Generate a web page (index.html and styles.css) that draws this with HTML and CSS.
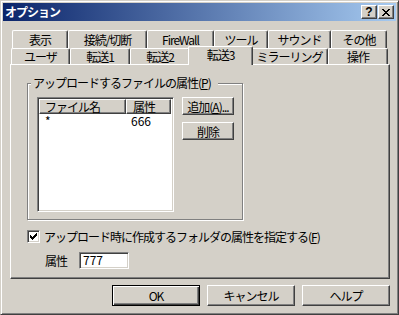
FILE: index.html
```html
<!DOCTYPE html>
<html lang="ja">
<head>
<meta charset="utf-8">
<title>オプション</title>
<link rel="stylesheet" href="styles.css">
</head>
<body>
<div class="window">
  <div class="titlebar">
    <span class="title">オプション</span>
    <div class="caption-btns">
      <span class="cbtn help">?</span>
      <span class="cbtn close"><svg width="8" height="7" viewBox="0 0 8 7" shape-rendering="crispEdges"><path d="M0 0h2v1h-2zM6 0h2v1h-2zM1 1h2v1h-2zM5 1h2v1h-2zM2 2h4v1h-4zM3 3h2v1h-2zM2 4h4v1h-4zM1 5h2v1h-2zM5 5h2v1h-2zM0 6h2v1h-2zM6 6h2v1h-2z" fill="#000"/></svg></span>
    </div>
  </div>
  <div class="client">
    <div class="tabrow back">
      <div class="tab w56">表示</div>
      <div class="tab w79">接続/切断</div>
      <div class="tab w67">FireWall</div>
      <div class="tab w54">ツール</div>
      <div class="tab w63">サウンド</div>
      <div class="tab w56">その他</div>
    </div>
    <div class="tabrow front">
      <div class="tab w59">ユーザ</div>
      <div class="tab w60">転送1</div>
      <div class="tab w60">転送2</div>
      <div class="tab sel">転送3</div>
      <div class="tab w77">ミラーリング</div>
      <div class="tab w60">操作</div>
    </div>
    <div class="panel">
      <div class="group">
        <div class="legend">アップロードするファイルの属性(<u>P</u>)</div>
        <div class="group-body">
          <div class="listview">
            <div class="lv-header">
              <div class="hcell c1">ファイル名</div>
              <div class="hcell c2">属性</div>
            </div>
            <div class="lv-row">
              <div class="cell c1">*</div>
              <div class="cell c2 num">666</div>
            </div>
          </div>
          <div class="side-btns">
            <div class="btn small">追加(<u>A</u>)...</div>
            <div class="btn small">削除</div>
          </div>
        </div>
      </div>
      <div class="check-row">
        <span class="cb"><svg width="7" height="7" viewBox="0 0 7 7" shape-rendering="crispEdges"><path d="M0 2h1v3h-1zM1 3h1v3h-1zM2 4h1v3h-1zM3 3h1v3h-1zM4 2h1v3h-1zM5 1h1v3h-1zM6 0h1v3h-1z" fill="#000"/></svg></span>
        <span class="check-label">アップロード時に作成するフォルダの属性を指定する(<u>F</u>)</span>
      </div>
      <div class="attr-row">
        <span class="attr-label">属性</span>
        <div class="edit num">777</div>
      </div>
    </div>
    <div class="dlg-btns">
      <div class="btn big default">OK</div>
      <div class="btn big">キャンセル</div>
      <div class="btn big">ヘルプ</div>
    </div>
  </div>
</div>
</body>
</html>
```

FILE: styles.css
```css
html, body {
  margin: 0;
  padding: 0;
  background: #d4d0c8;
}
body {
  font-family: "Noto Sans CJK JP", "Noto Sans", sans-serif;
  font-size: 12px;
  letter-spacing: -1px;
  color: #000;
}
.window {
  box-sizing: border-box;
  width: 399px;
  height: 315px;
  background: #d4d0c8;
  border: 1px solid;
  border-color: #d4d0c8 #404040 #404040 #d4d0c8;
  box-shadow: inset 1px 1px #fff, inset -1px -1px #808080;
  padding: 2px;
}
.titlebar {
  height: 18px;
  display: flex;
  align-items: center;
  justify-content: space-between;
  padding: 0 2px 0 2px;
  background: linear-gradient(to right, #0a246a, #a6caf0);
}
.title {
  color: #fff;
  font-weight: bold;
  line-height: 14px;
}
.caption-btns {
  display: flex;
  gap: 1px;
}
.cbtn {
  box-sizing: border-box;
  width: 16px;
  height: 14px;
  background: #d4d0c8;
  border: 1px solid;
  border-color: #fff #404040 #404040 #fff;
  box-shadow: inset -1px -1px #808080;
  display: flex;
  align-items: center;
  justify-content: center;
}
.cbtn.help {
  font-weight: bold;
  font-size: 12px;
  letter-spacing: 0;
  line-height: 10px;
  font-family: "Liberation Sans", sans-serif;
}
.client {
  padding: 0 6px 0 7px;
}
.tabrow {
  display: flex;
  align-items: flex-start;
}
.tabrow.back {
  margin-top: 9px;
  margin-left: 2px;
}
.tabrow.front {
  margin-left: 1px;
}
.tab {
  box-sizing: border-box;
  height: 18px;
  background: #d4d0c8;
  border-left: 1px solid #fff;
  border-top: 1px solid #fff;
  border-right: 1px solid #404040;
  box-shadow: inset -1px 0 #808080;
  border-radius: 2px 2px 0 0;
  display: flex;
  align-items: center;
  justify-content: center;
  white-space: nowrap;
  line-height: 14px;
  padding-top: 1px;
}
.front .tab {
  height: 16px;
  padding-top: 1px;
}
.front .tab.sel {
  position: relative;
  z-index: 1;
  width: 65px;
  height: 19px;
  margin: -2px -2px -1px -2px;
  padding-top: 0;
  padding-bottom: 2px;
}
.w54 { width: 54px; }
.w56 { width: 56px; }
.w59 { width: 59px; }
.w60 { width: 60px; }
.w63 { width: 63px; }
.w67 { width: 67px; }
.w77 { width: 77px; }
.w79 { width: 79px; }
.panel {
  box-sizing: border-box;
  height: 215px;
  border: 1px solid;
  border-color: #fff #404040 #404040 #fff;
  box-shadow: inset -1px -1px #808080;
  padding: 18px 0 0 16px;
}
.group {
  box-sizing: border-box;
  width: 216px;
  height: 137px;
  border: 1px solid #808080;
  box-shadow: inset 1px 1px #fff, 1px 1px #fff;
  padding: 0 0 0 9px;
  line-height: 14px;
}
.legend {
  width: max-content;
  height: 14px;
  margin: -8px 0 0 -6px;
  padding: 0 7px 0 2px;
  background: #d4d0c8;
  white-space: nowrap;
}
.group-body {
  display: flex;
  margin-top: 7px;
}
.listview {
  box-sizing: border-box;
  width: 137px;
  height: 115px;
  background: #fff;
  border: 1px solid;
  border-color: #808080 #fff #fff #808080;
  box-shadow: inset 1px 1px #404040, inset -1px -1px #d4d0c8;
  padding: 1px;
}
.lv-header {
  display: flex;
  height: 15px;
}
.hcell {
  box-sizing: border-box;
  height: 15px;
  background: #d4d0c8;
  border: 1px solid;
  border-color: #fff #404040 #404040 #fff;
  box-shadow: inset -1px -1px #808080;
  line-height: 13px;
  white-space: nowrap;
}
.hcell.c1 { width: 87px; padding-left: 5px; }
.hcell.c2 { width: 45px; padding-left: 6px; }
.lv-row {
  display: flex;
  height: 13px;
  line-height: 13px;
}
.cell.c1 { width: 87px; padding-left: 6px; box-sizing: border-box; }
.cell.c2 { width: 45px; padding-left: 5px; box-sizing: border-box; }
.num { letter-spacing: 0; }
.side-btns {
  display: flex;
  flex-direction: column;
  gap: 7px;
  margin-left: 8px;
}
.btn {
  box-sizing: border-box;
  background: #d4d0c8;
  border: 1px solid;
  border-color: #fff #404040 #404040 #fff;
  box-shadow: inset -1px -1px #808080;
  display: flex;
  align-items: center;
  justify-content: center;
  white-space: nowrap;
  line-height: 13px;
}
.btn.small {
  width: 52px;
  height: 18px;
}
.btn.big {
  width: 88px;
  height: 21px;
}
.btn.default {
  border-color: #000;
  box-shadow: inset 1px 1px #fff, inset -1px -1px #404040, inset -2px -2px #808080;
}
.check-row {
  display: flex;
  align-items: center;
  height: 13px;
  margin-top: 10px;
  line-height: 13px;
}
.cb {
  box-sizing: border-box;
  width: 13px;
  height: 13px;
  background: #fff;
  border: 1px solid;
  border-color: #808080 #fff #fff #808080;
  box-shadow: inset 1px 1px #404040, inset -1px -1px #d4d0c8;
  display: flex;
  align-items: center;
  justify-content: center;
}
.check-label {
  margin-left: 4px;
  white-space: nowrap;
}
.attr-row {
  display: flex;
  align-items: center;
  margin-top: 9px;
  height: 17px;
}
.attr-label {
  width: 34px;
  margin-left: 18px;
}
.edit {
  box-sizing: border-box;
  width: 50px;
  height: 17px;
  background: #fff;
  border: 1px solid;
  border-color: #808080 #fff #fff #808080;
  box-shadow: inset 1px 1px #404040, inset -1px -1px #d4d0c8;
  padding-left: 3px;
  line-height: 14px;
}
.dlg-btns {
  display: flex;
  justify-content: flex-end;
  gap: 7px;
  margin-top: 6px;
}
```
